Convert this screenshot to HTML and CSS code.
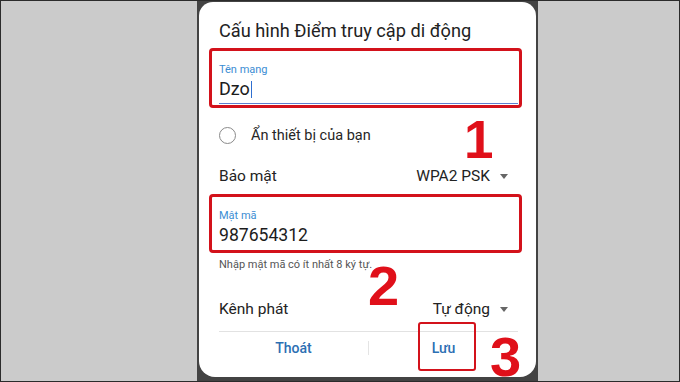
FILE: index.html
```html
<!DOCTYPE html>
<html lang="vi">
<head>
<meta charset="utf-8">
<title>Cấu hình Điểm truy cập di động</title>
<link rel="stylesheet" href="styles.css">
</head>
<body>
<div class="frame">
  <div class="phone">
    <div class="dialog">
      <h1 class="title">Cấu hình Điểm truy cập di động</h1>

      <div class="field field-name">
        <div class="label">Tên mạng</div>
        <div class="value">Dzo<span class="caret"></span></div>
        <div class="underline"></div>
      </div>

      <div class="check-row">
        <span class="radio"></span>
        <span class="check-text">Ẩn thiết bị của bạn</span>
      </div>

      <div class="setting-row">
        <span>Bảo mật</span>
        <span class="select">WPA2 PSK<span class="tri"></span></span>
      </div>

      <div class="field field-pass">
        <div class="label">Mật mã</div>
        <div class="value">987654312</div>
      </div>

      <div class="helper">Nhập mật mã có ít nhất 8 ký tự.</div>

      <div class="setting-row setting-channel">
        <span>Kênh phát</span>
        <span class="select">Tự động<span class="tri"></span></span>
      </div>

      <div class="actions">
        <button class="action">Thoát</button>
        <span class="vdiv"></span>
        <button class="action">Lưu</button>
      </div>

      <span class="highlight-save"></span>
      <span class="mark mark-1">1</span>
      <span class="mark mark-2">2</span>
      <span class="mark mark-3">3</span>
    </div>
  </div>
</div>
</body>
</html>
```

FILE: styles.css
```css
* { box-sizing: border-box; }

html, body {
  margin: 0;
  padding: 0;
  width: 680px;
  height: 382px;
  overflow: hidden;
}

body {
  font-family: Roboto, "Noto Sans", "Liberation Sans", sans-serif;
  color: #1f1f1f;
}

.frame {
  width: 680px;
  height: 382px;
  border: 1px solid #2b2b2b;
  background: #cbcbcb;
  display: flex;
  padding-left: 196px;
}

.phone {
  width: 341px;
  height: 380px;
  background: #434343;
  padding: 1px 2px 4px 2px;
  display: flex;
}

.dialog {
  position: relative;
  flex: 1;
  background: #ffffff;
  border-radius: 14px 14px 16px 16px;
  padding: 17px 18px 13px 20px;
  display: flex;
  flex-direction: column;
}

.title {
  margin: 0;
  font-size: 18.2px;
  line-height: 24px;
  font-weight: 400;
  color: #222222;
  white-space: nowrap;
}

.field {
  border: 3px solid #d3121b;
  border-radius: 4px;
  margin-left: -10px;
  margin-right: -4px;
  padding: 12px 1px 0 7px;
}

.field-name {
  margin-top: 5px;
  height: 60px;
}

.field-pass {
  margin-top: 4px;
  height: 59px;
}

.label {
  font-size: 11px;
  line-height: 13px;
  color: #3b8dd3;
}

.value {
  margin-top: 2px;
  font-size: 18px;
  line-height: 22px;
  color: #1c1c1c;
  display: flex;
  align-items: center;
}

.field-pass .value {
  font-size: 17.6px;
}

.caret {
  display: inline-block;
  width: 0;
  height: 17px;
  border-left: 1.5px solid #2f6fd0;
  margin-left: 1px;
}

.underline {
  margin-top: 3px;
  height: 1px;
  background: #5d7fd0;
}

.check-row {
  margin-top: 14px;
  height: 26px;
  display: flex;
  align-items: center;
}

.radio {
  width: 17px;
  height: 17px;
  border: 1.5px solid #8a8a8a;
  border-radius: 50%;
  flex: none;
}

.check-text {
  margin-left: 15px;
  font-size: 14.5px;
  color: #262626;
}

.setting-row {
  margin-top: 14px;
  height: 28px;
  display: flex;
  align-items: center;
  justify-content: space-between;
  font-size: 15.5px;
  color: #232323;
  padding-right: 10px;
}

.setting-channel {
  margin-top: 23px;
}

.select {
  display: flex;
  align-items: center;
}

.tri {
  margin-left: 10px;
  width: 0;
  height: 0;
  border-left: 4px solid transparent;
  border-right: 4px solid transparent;
  border-top: 5px solid #666666;
}

.helper {
  margin-top: 5px;
  font-size: 11px;
  line-height: 14px;
  color: #555555;
  white-space: nowrap;
}

.actions {
  margin-top: 8px;
  border-top: 1px solid #e2e2e2;
  height: 33px;
  display: flex;
  align-items: center;
}

.action {
  flex: 1;
  background: none;
  border: 0;
  padding: 0;
  font-family: Roboto, "Noto Sans", "Liberation Sans", sans-serif;
  font-size: 14px;
  font-weight: 500;
  color: #2c6fb3;
  line-height: 20px;
}

.vdiv {
  width: 1px;
  height: 14px;
  background: #e4e4e4;
}

.highlight-save {
  position: absolute;
  left: 219px;
  top: 320px;
  width: 58px;
  height: 49px;
  border: 2.5px solid #d3121b;
  border-radius: 3px;
}

.mark {
  position: absolute;
  font-family: "Liberation Sans", Arial, sans-serif;
  font-weight: 700;
  color: #e0101a;
  line-height: 0.7;
}

.mark-1 {
  left: 265px;
  top: 119px;
  font-size: 53px;
}

.mark-2 {
  left: 169px;
  top: 264px;
  font-size: 56px;
}

.mark-3 {
  left: 291px;
  top: 335px;
  font-size: 56px;
}
```
